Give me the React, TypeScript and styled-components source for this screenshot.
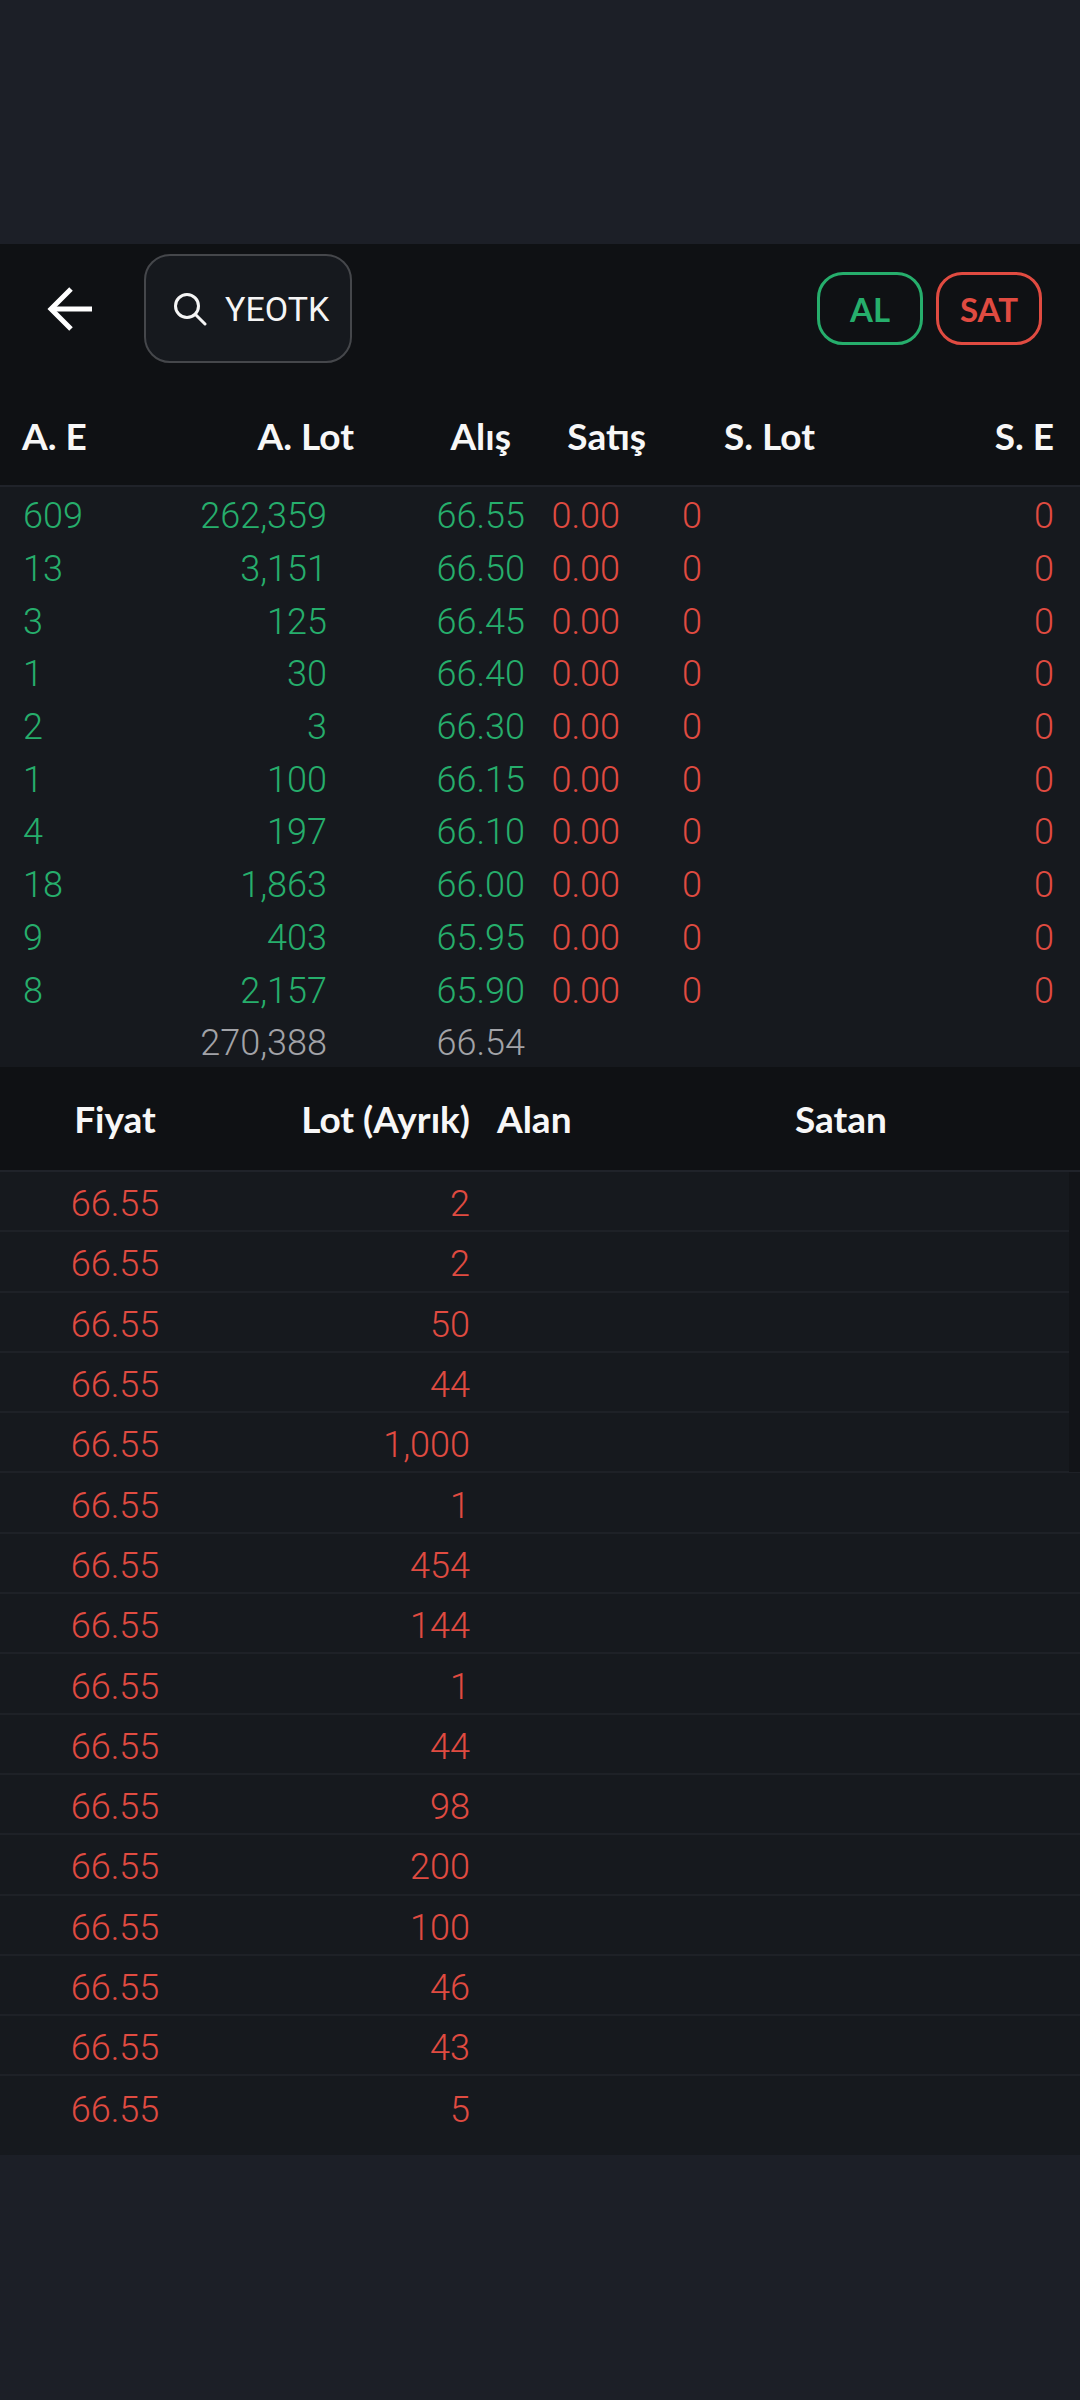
import React from 'react';
import styled, { createGlobalStyle } from 'styled-components';

const GREEN = '#26ae6c';
const RED = '#e04b41';
const GREY = '#a2a3a8';
const HEAD_FONT = '"Lato", "Noto Sans", sans-serif';
const NUM_FONT = 'Roboto, "Liberation Sans", sans-serif';

type Tone = 'green' | 'red' | 'grey';
const toneColor = (tone: Tone) => (tone === 'green' ? GREEN : tone === 'red' ? RED : GREY);

const GlobalStyle = createGlobalStyle`
  html, body { margin: 0; padding: 0; background: #1c1f27; }
`;

const Screen = styled.div`
  width: 1080px;
  height: 2400px;
  background: #1c1f27;
  padding-top: 244px;
  box-sizing: border-box;
  overflow: hidden;
`;

const Toolbar = styled.div`
  height: 141px;
  background: #0f1114;
  display: flex;
  align-items: flex-start;
  padding: 10px 38px 0 46px;
  box-sizing: border-box;
`;

const BackButton = styled.div`
  width: 48px;
  height: 109px;
  display: flex;
  align-items: center;
  margin-right: 50px;
`;

const SearchBox = styled.div`
  width: 208px;
  height: 109px;
  box-sizing: border-box;
  border: 2px solid #45474b;
  border-radius: 26px;
  background: #16191e;
  display: flex;
  align-items: center;
  padding-left: 27px;
  gap: 18px;
`;

const SearchText = styled.span`
  font-family: ${NUM_FONT};
  font-size: 34px;
  color: #f5f5f5;
`;

const Actions = styled.div`
  margin-left: auto;
  margin-top: 18px;
  display: flex;
  gap: 13px;
`;

const ActionButton = styled.div<{ $tone: Tone }>`
  width: 106px;
  height: 73px;
  box-sizing: border-box;
  border: 3px solid ${({ $tone }) => toneColor($tone)};
  border-radius: 26px;
  display: flex;
  align-items: center;
  justify-content: center;
  font-family: ${HEAD_FONT};
  font-weight: 700;
  font-size: 33px;
  color: ${({ $tone }) => toneColor($tone)};
`;

const DEPTH_HEAD_COLS = '168px 164px 157px 135px 169px 239px';
const DEPTH_ROW_COLS = '157px 147px 198px 95px 82px 352px';
const TRADE_HEAD_COLS = '230px 240px 27px 298px 1fr';
const TRADE_ROW_COLS = '230px 240px 1fr';

const HeadRow = styled.div<{ $cols: string; $pad: number; $height: number }>`
  height: ${({ $height }) => $height}px;
  display: grid;
  grid-template-columns: ${({ $cols }) => $cols};
  align-items: center;
  padding-left: ${({ $pad }) => $pad}px;
  background: #0f1114;
  border-bottom: 2px solid #20232a;
`;

const HeadCell = styled.div<{ $align: 'left' | 'right' | 'center' }>`
  font-family: ${HEAD_FONT};
  font-weight: 700;
  font-size: 37px;
  color: #f7f7f7;
  text-align: ${({ $align }) => $align};
  white-space: nowrap;
`;

const DepthBody = styled.div`
  background: #16191e;
  height: 580px;
`;

const DepthRow = styled.div`
  height: 52.7px;
  display: grid;
  grid-template-columns: ${DEPTH_ROW_COLS};
  align-items: center;
  padding-left: 23px;
`;

const NumCell = styled.div<{ $tone: Tone; $left?: boolean }>`
  font-family: ${NUM_FONT};
  font-weight: 300;
  font-size: 36px;
  line-height: 1;
  padding-top: 6px;
  color: ${({ $tone }) => toneColor($tone)};
  text-align: ${({ $left }) => ($left ? 'left' : 'right')};
`;

const TradeBody = styled.div`
  position: relative;
  height: 983px;
  background: #16191e;
`;

const TradeRow = styled.div<{ $last: boolean }>`
  height: 60.3px;
  box-sizing: border-box;
  display: grid;
  grid-template-columns: ${TRADE_ROW_COLS};
  align-items: center;
  border-bottom: ${({ $last }) => ($last ? 'none' : '2px solid #1e2127')};
`;

const TradePrice = styled(NumCell)`
  text-align: center;
`;

const ScrollThumb = styled.div`
  position: absolute;
  top: 0;
  right: 0;
  width: 11px;
  height: 300px;
  background: #121418;
`;

const depthRows = [
  ['609', '262,359', '66.55'],
  ['13', '3,151', '66.50'],
  ['3', '125', '66.45'],
  ['1', '30', '66.40'],
  ['2', '3', '66.30'],
  ['1', '100', '66.15'],
  ['4', '197', '66.10'],
  ['18', '1,863', '66.00'],
  ['9', '403', '65.95'],
  ['8', '2,157', '65.90'],
];

const tradeLots = ['2', '2', '50', '44', '1,000', '1', '454', '144', '1', '44', '98', '200', '100', '46', '43', '5'];

const BackIcon = () => (
  <svg width="48" height="44" viewBox="0 0 48 44" fill="none" stroke="#fff" strokeWidth="5" strokeLinecap="butt" strokeLinejoin="miter">
    <path d="M6 22H46" />
    <path d="M25 2L5 22L25 42" />
  </svg>
);

const SearchIcon = () => (
  <svg width="34" height="34" viewBox="0 0 34 34" fill="none" stroke="#f5f5f5" strokeWidth="3" strokeLinecap="round">
    <circle cx="14" cy="14" r="11.5" />
    <path d="M22.5 22.5L32 32" />
  </svg>
);

const App: React.FC = () => (
  <>
    <GlobalStyle />
    <Screen>
      <Toolbar>
        <BackButton><BackIcon /></BackButton>
        <SearchBox>
          <SearchIcon />
          <SearchText>YEOTK</SearchText>
        </SearchBox>
        <Actions>
          <ActionButton $tone="green">AL</ActionButton>
          <ActionButton $tone="red">SAT</ActionButton>
        </Actions>
      </Toolbar>

      <HeadRow $cols={DEPTH_HEAD_COLS} $pad={22} $height={100}>
        <HeadCell $align="left">A. E</HeadCell>
        <HeadCell $align="right">A. Lot</HeadCell>
        <HeadCell $align="right">Alış</HeadCell>
        <HeadCell $align="right">Satış</HeadCell>
        <HeadCell $align="right">S. Lot</HeadCell>
        <HeadCell $align="right">S. E</HeadCell>
      </HeadRow>
      <DepthBody>
        {depthRows.map(([count, lot, price], i) => (
          <DepthRow key={i}>
            <NumCell $tone="green" $left>{count}</NumCell>
            <NumCell $tone="green">{lot}</NumCell>
            <NumCell $tone="green">{price}</NumCell>
            <NumCell $tone="red">0.00</NumCell>
            <NumCell $tone="red">0</NumCell>
            <NumCell $tone="red">0</NumCell>
          </DepthRow>
        ))}
        <DepthRow>
          <span />
          <NumCell $tone="grey">270,388</NumCell>
          <NumCell $tone="grey">66.54</NumCell>
        </DepthRow>
      </DepthBody>

      <HeadRow $cols={TRADE_HEAD_COLS} $pad={0} $height={103}>
        <HeadCell $align="center">Fiyat</HeadCell>
        <HeadCell $align="right">Lot (Ayrık)</HeadCell>
        <span />
        <HeadCell $align="left">Alan</HeadCell>
        <HeadCell $align="left">Satan</HeadCell>
      </HeadRow>
      <TradeBody>
        {tradeLots.map((lot, i) => (
          <TradeRow key={i} $last={i === tradeLots.length - 1}>
            <TradePrice $tone="red">66.55</TradePrice>
            <NumCell $tone="red">{lot}</NumCell>
          </TradeRow>
        ))}
        <ScrollThumb />
      </TradeBody>
    </Screen>
  </>
);

export default App;
